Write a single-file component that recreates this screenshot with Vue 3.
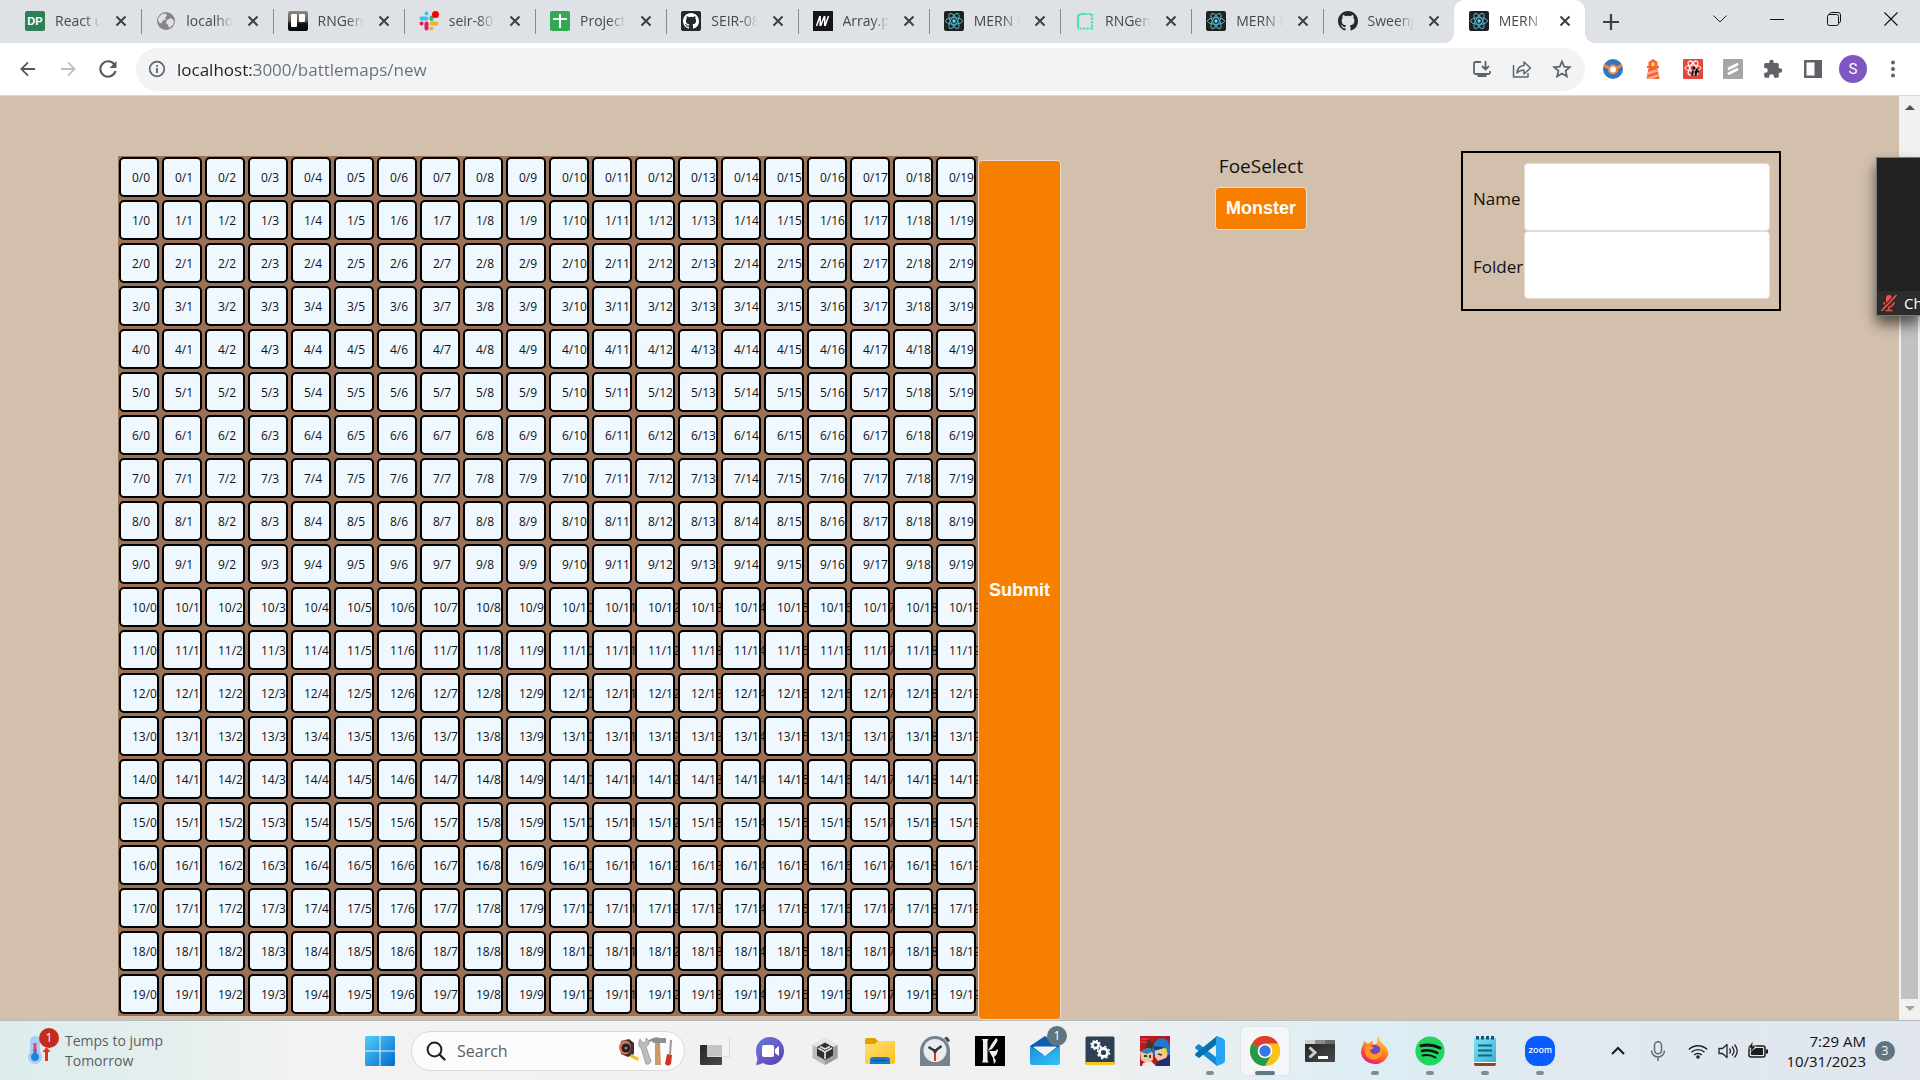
<script setup>
import { ref } from 'vue'

const tabs = [
  { icon: 'dp', title: 'React u' },
  { icon: 'globe', title: 'localhos' },
  { icon: 'trello', title: 'RNGen' },
  { icon: 'slack', title: 'seir-80' },
  { icon: 'sheets', title: 'Project' },
  { icon: 'github-dark', title: 'SEIR-08' },
  { icon: 'mdn', title: 'Array.p' },
  { icon: 'react', title: 'MERN I' },
  { icon: 'rn', title: 'RNGen' },
  { icon: 'react', title: 'MERN I' },
  { icon: 'github', title: 'Sweeng' },
  { icon: 'react', title: 'MERN', active: true }
]
const extensions = ['swirl', 'lighthouse', 'reactit', 'gray', 'puzzle', 'panel']
const apps = [
  { icon: 'taskview', label: 'Task view' },
  { icon: 'chat', label: 'Chat' },
  { icon: 'unity', label: 'Unity Hub' },
  { icon: 'folder', label: 'File Explorer' },
  { icon: 'clock', label: 'Clock' },
  { icon: 'kapp', label: 'Game launcher' },
  { icon: 'mail', label: 'Mail', badge: 1 },
  { icon: 'gears', label: 'Services' },
  { icon: 'hero', label: 'Battle game' },
  { icon: 'vscode', label: 'Visual Studio Code', open: true },
  { icon: 'chrome', label: 'Google Chrome', current: true },
  { icon: 'terminal', label: 'Terminal' },
  { icon: 'firefox', label: 'Firefox', open: true },
  { icon: 'spotify', label: 'Spotify', open: true },
  { icon: 'notepad', label: 'Notepad', open: true },
  { icon: 'zoomapp', label: 'Zoom', open: true }
]
const size = 20
const rows = Array.from({ length: size }, (_, r) => Array.from({ length: size }, (_, c) => `${r}/${c}`))
const address = ref('localhost:3000/battlemaps/new')
const name = ref('')
const folder = ref('')
const query = ref('')
</script>

<template>
  <div class="desktop">
    <svg class="sprite" aria-hidden="true">
      <defs>
        <linearGradient id="g-win" x1="0" y1="0" x2="1" y2="1"><stop offset="0" stop-color="#4fd0fb" /><stop offset="1" stop-color="#0469ca" /></linearGradient>
        <linearGradient id="g-chat" x1="0" y1="0" x2="1" y2="1"><stop offset="0" stop-color="#5b7fd6" /><stop offset=".5" stop-color="#6a5cc8" /><stop offset="1" stop-color="#4b3fb4" /></linearGradient>
        <linearGradient id="g-folder" x1="0" y1="0" x2="1" y2="1"><stop offset="0" stop-color="#ffdf73" /><stop offset="1" stop-color="#fdbf22" /></linearGradient>
        <linearGradient id="g-mail" x1="0" y1="0" x2="1" y2="1"><stop offset="0" stop-color="#1c8fe0" /><stop offset="1" stop-color="#32c5f4" /></linearGradient>
        <linearGradient id="g-fox" x1=".8" y1="0" x2=".3" y2="1"><stop offset="0" stop-color="#ffe14a" /><stop offset=".45" stop-color="#ff8a1e" /><stop offset=".8" stop-color="#ff3750" /><stop offset="1" stop-color="#e31587" /></linearGradient>
        <linearGradient id="g-note" x1="0" y1="0" x2="1" y2="1"><stop offset="0" stop-color="#7fe0f4" /><stop offset="1" stop-color="#39b2d8" /></linearGradient>
        <linearGradient id="g-dark" x1="0" y1="0" x2="1" y2="1"><stop offset="0" stop-color="#262626" /><stop offset="1" stop-color="#4a4a4a" /></linearGradient>
        <linearGradient id="g-trello" x1="0" y1="0" x2="0" y2="1"><stop offset="0" stop-color="#8a8b85" /><stop offset=".45" stop-color="#6f6148" /><stop offset=".65" stop-color="#0c1420" /><stop offset="1" stop-color="#05080d" /></linearGradient>
      </defs>
      <symbol id="globe" viewBox="0 0 20 20"><circle cx="10" cy="10" r="9" fill="#868686" /><path d="M3 6l3-3 4-.5 1 2-2 2 1 2-3 1-2 3-2-1-1-3zM11 9l4-2 3 3-1 4-4 3-1-3-2-2z" fill="#dee1e6" /></symbol>
      <symbol id="trello" viewBox="0 0 20 20"><rect width="20" height="20" rx="2" fill="url(#g-trello)" /><rect x="3" y="3" width="6" height="13" rx="1" fill="#fff" /><rect x="11" y="3" width="6" height="8" rx="1" fill="#fff" /></symbol>
      <symbol id="slack" viewBox="0 0 20 20"><g fill="none" stroke-width="4" stroke-linecap="round"><path d="M2.500 7.500h5M7.500 2.500v.1" stroke="#36c5f0" /><path d="M12.500 6.500v1.500" stroke="#2eb67d" /><path d="M12.500 12.500h5M12.500 17.500v-.1" stroke="#ecb22e" /><path d="M7.500 12.500v5M2.500 12.500h.1" stroke="#e01e5a" /></g><circle cx="16.500" cy="3.500" r="3.500" fill="#f00" /></symbol>
      <symbol id="sheets" viewBox="0 0 20 20"><rect width="20" height="20" rx="2" fill="#34a853" /><path d="M10 3v14M3 8h14" stroke="#fff" stroke-width="2" /></symbol>
      <symbol id="github" viewBox="0 0 16 16"><path fill="#24292f" d="M8 0C3.580 0 0 3.580 0 8c0 3.540 2.290 6.530 5.470 7.590.4.070.55-.17.55-.38 0-.19-.01-.82-.01-1.490-2.010.37-2.530-.49-2.690-.94-.09-.23-.48-.94-.82-1.130-.28-.15-.68-.52-.01-.53.63-.01 1.080.58 1.230.82.72 1.210 1.870.87 2.330.66.07-.52.28-.87.51-1.070-1.780-.2-3.640-.89-3.640-3.950 0-.87.31-1.590.82-2.150-.08-.2-.36-1.020.08-2.120 0 0 .67-.21 2.200.82a7.600 7.600 0 0 1 4 0c1.530-1.040 2.200-.82 2.200-.82.44 1.100.16 1.920.08 2.120.51.56.82 1.270.82 2.150 0 3.070-1.870 3.750-3.650 3.950.29.25.54.73.54 1.480 0 1.070-.01 1.930-.01 2.200 0 .21.15.46.55.38A8 8 0 0 0 16 8c0-4.420-3.580-8-8-8z" /></symbol>
      <symbol id="github-dark" viewBox="0 0 20 20"><rect width="20" height="20" rx="2" fill="#24292e" /><path transform="translate(2 2)" fill="#fff" d="M8 0C3.580 0 0 3.580 0 8c0 3.540 2.290 6.530 5.470 7.590.4.070.55-.17.55-.38 0-.19-.01-.82-.01-1.490-2.010.37-2.530-.49-2.690-.94-.09-.23-.48-.94-.82-1.130-.28-.15-.68-.52-.01-.53.63-.01 1.080.58 1.230.82.72 1.210 1.870.87 2.330.66.07-.52.28-.87.51-1.070-1.780-.2-3.640-.89-3.640-3.950 0-.87.31-1.590.82-2.150-.08-.2-.36-1.020.08-2.120 0 0 .67-.21 2.200.82a7.600 7.600 0 0 1 4 0c1.530-1.040 2.200-.82 2.200-.82.44 1.100.16 1.920.08 2.120.51.56.82 1.270.82 2.150 0 3.070-1.870 3.750-3.650 3.950.29.25.54.73.54 1.480 0 1.070-.01 1.930-.01 2.200 0 .21.15.46.55.38A8 8 0 0 0 16 8c0-4.420-3.580-8-8-8z" /></symbol>
      <symbol id="mdn" viewBox="0 0 20 20"><rect width="20" height="20" fill="#15141a" /><path d="M3.500 15L7 5M7.200 5v10M7.500 15L11.500 5M11.700 5v10M15.500 5L12 15" fill="none" stroke="#fff" stroke-width="1.500" /></symbol>
      <symbol id="react" viewBox="0 0 20 20"><rect width="20" height="20" rx="2" fill="#202020" /><g fill="none" stroke="#4fb8cf" stroke-width="1"><ellipse cx="10" cy="10" rx="8.500" ry="3.300" /><ellipse cx="10" cy="10" rx="8.500" ry="3.300" transform="rotate(60 10 10)" /><ellipse cx="10" cy="10" rx="8.500" ry="3.300" transform="rotate(120 10 10)" /></g><circle cx="10" cy="10" r="1.700" fill="#61dafb" /></symbol>
      <symbol id="rn" viewBox="0 0 20 20"><path d="M3 17.500V7q0-4 4-4h3" fill="none" stroke="#4be3b5" stroke-width="2.200" /><path d="M10 3h7v14.500H3" fill="none" stroke="#4be3b5" stroke-width="2.200" stroke-dasharray="2.500 1" /></symbol>
      <symbol id="close" viewBox="0 0 12 12"><path d="M1.500 1.500l9 9m0-9l-9 9" stroke="#3c4043" stroke-width="2" /></symbol>
      <symbol id="plus" viewBox="0 0 16 16"><path d="M8 0v16M0 8h16" stroke="#3c4043" stroke-width="2.200" /></symbol>
      <symbol id="w-down" viewBox="0 0 14 14"><path d="M.5 3.500L7 10l6.500-6.500" fill="none" stroke="#222" /></symbol>
      <symbol id="w-min" viewBox="0 0 14 14"><path d="M0 7.500h14" stroke="#111" stroke-width="1" /></symbol>
      <symbol id="w-max" viewBox="0 0 14 14"><rect x=".5" y="2.500" width="11" height="11" rx="2" fill="none" stroke="#111" /><path d="M2.500 2.500v-.5q.5-1.500 2-1.500H11q2.500 0 2.500 2.500v6q0 1.500-1.500 2" fill="none" stroke="#111" /></symbol>
      <symbol id="w-close" viewBox="0 0 14 14"><path d="M.5.500l13 13m0-13l-13 13" stroke="#111" stroke-width="1.100" /></symbol>
      <symbol id="arrow-back" viewBox="0 0 18 18"><path d="M17 9H2M9 1.500L1.500 9 9 16.500" fill="none" stroke="currentColor" stroke-width="2" /></symbol>
      <symbol id="reload" viewBox="0 0 18 18"><path d="M15.300 4.500A7.700 7.700 0 1 0 16.500 11" fill="none" stroke="currentColor" stroke-width="2.100" /><path d="M17.500 1v7h-7z" fill="currentColor" /></symbol>
      <symbol id="info" viewBox="0 0 18 18"><circle cx="9" cy="9" r="7.300" fill="none" stroke="#5f6368" stroke-width="1.700" /><path d="M9 8v5M9 5v1.800" stroke="#5f6368" stroke-width="1.800" /></symbol>
      <symbol id="install" viewBox="0 0 20 20"><path d="M9 3H3.500Q2 3 2 4.500v9Q2 15 3.500 15h13q1.500 0 1.500-1.500V12" fill="none" stroke="#5f6368" stroke-width="1.800" /><path d="M5.500 15h9v3h-9z" fill="#5f6368" /><path d="M13.500 2v8M10 7l3.500 3.500L17 7" fill="none" stroke="#5f6368" stroke-width="1.800" /></symbol>
      <symbol id="share" viewBox="0 0 20 20"><path d="M1.500 6v12h14.500v-4M5 14q.5-7 7-7.500V3l6.500 6-6.500 6v-3.700Q7.500 11 5 14z" fill="none" stroke="#5f6368" stroke-width="1.500" stroke-linejoin="round" /></symbol>
      <symbol id="star" viewBox="0 0 20 20"><path d="M10 2.500l2.200 5.200 5.700.5-4.300 3.700 1.300 5.600-4.900-3-4.900 3 1.300-5.600L2.100 8.200l5.700-.5z" fill="none" stroke="#5f6368" stroke-width="1.700" /></symbol>
      <symbol id="swirl" viewBox="0 0 20 20"><circle cx="10" cy="10" r="10" fill="#3574bd" /><path d="M.8 6L6 9M19.200 6L14 9" stroke="#f08a4b" stroke-width="3" /><circle cx="10" cy="10.500" r="4" fill="#fff" stroke="#f08a4b" stroke-width="2.200" /></symbol>
      <symbol id="lighthouse" viewBox="0 0 20 20"><path d="M10 0l4.500 3v4H16v2h-1.500l2 11h-13l2-11H4V7h1.500V3z" fill="#f4613c" /><path d="M8.500 3.500h3V7h-3z" fill="#fde92e" /><path d="M5 13l9.500-3 .4 2.500L4.500 16zM4 19l11.500-4 .5 2-7 3H3.700z" fill="#ffab8c" /></symbol>
      <symbol id="reactit" viewBox="0 0 20 20"><rect width="20" height="20" rx="1" fill="#e2493c" /><g fill="none" stroke="#fff" stroke-width="1"><ellipse cx="10" cy="9" rx="8" ry="3" /><ellipse cx="10" cy="9" rx="8" ry="3" transform="rotate(60 10 9)" /><ellipse cx="10" cy="9" rx="8" ry="3" transform="rotate(120 10 9)" /></g><path d="M10 11.500l-1 5M14 9.500l-1.500 7.500M11.500 12.500h4.500" fill="none" stroke="#111" stroke-width="2" /><circle cx="11" cy="9" r="1.500" fill="#111" /></symbol>
      <symbol id="gray" viewBox="0 0 20 20"><rect width="20" height="20" rx="1" fill="#a6a6a6" /><path d="M6 9.500L14 5.500M6 14.500L14 10.500" stroke="#fff" stroke-width="2.800" stroke-linecap="round" /></symbol>
      <symbol id="puzzle" viewBox="0 0 20 20"><path d="M17 9.200h-1.200V5.500q0-1.500-1.500-1.500h-3.600V2.900a2.200 2.200 0 0 0-4.400 0V4H2.700Q1.200 4 1.200 5.500V9h1.200a2.400 2.400 0 0 1 0 4.800H1.200v3.500q0 1.500 1.500 1.500h3.500v-1.200a2.400 2.400 0 0 1 4.800 0v1.200h3.300q1.500 0 1.500-1.500v-3.600H17a2.200 2.200 0 0 0 0-4.500z" fill="#5f6368" /></symbol>
      <symbol id="panel" viewBox="0 0 20 20"><path d="M1 1h18v18H1zM3.500 3.500v13h8v-13z" fill="#5f6368" fill-rule="evenodd" /></symbol>
      <symbol id="dots" viewBox="0 0 20 20"><g fill="#5f6368"><circle cx="10" cy="3.500" r="2" /><circle cx="10" cy="10" r="2" /><circle cx="10" cy="16.500" r="2" /></g></symbol>

      <symbol id="thermo" viewBox="0 0 24 32"><rect x="2" y="1" width="10" height="22" rx="5" fill="#a9cdf3" /><circle cx="7" cy="22" r="7" fill="#a9cdf3" /><path d="M7 8v10" stroke="#e2476b" stroke-width="3" /><path d="M7 14v6" stroke="#7063b8" stroke-width="3" /><circle cx="7" cy="22" r="4" fill="#1b84dd" /><path d="M18.500 12l4 5h-2.500v9h-3v-9h-2.500z" fill="#f02a1c" /></symbol>
      <symbol id="windows" viewBox="0 0 30 30"><path d="M0 1.500Q0 0 1.500 0h13v14.500H0zM15.500 0h13Q30 0 30 1.500v13H15.500zM0 15.500h14.500V30h-13Q0 30 0 28.500zM15.500 15.500H30v13q0 1.500-1.500 1.500h-13z" fill="url(#g-win)" /></symbol>
      <symbol id="search" viewBox="0 0 20 20"><circle cx="8.500" cy="8.500" r="6.900" fill="none" stroke="#222" stroke-width="2" /><path d="M13.500 13.500l5 5" stroke="#222" stroke-width="2.400" stroke-linecap="round" /></symbol>
      <symbol id="tools" viewBox="0 0 56 30"><path d="M3 5l8-2 5 4v11l-6 3-7-3z" fill="#353535" /><ellipse cx="7" cy="11.500" rx="6" ry="7" fill="#e96f4f" /><circle cx="8" cy="12" r="4.500" fill="#222" /><circle cx="8" cy="12" r="1.500" fill="#888" /><path d="M13 18l8 4-1 3-8-4z" fill="#f1c02b" /><path d="M22 3l3 4 3-1V2q4 2 3 6l-3 3 5 14q-1 4-5 3L23 12q-4-2-1-9z" fill="#bcbcbc" stroke="#8e8e8e" stroke-width=".7" /><path d="M37 7h5l1 22h-6z" fill="#c99a6c" /><path d="M31 4q6-4 11-2h6v5H36q-3-3-5-1z" fill="#899097" /><path d="M52 4l2 0-1 15-2-1z" fill="#999" /><path d="M49 18l5 1-1 9q-3 3-6 0z" fill="#cf321f" /></symbol>
      <symbol id="taskview" viewBox="0 0 30 30"><rect x="0" y="9" width="22" height="20" rx="1" fill="url(#g-dark)" /><rect x="7" y="1" width="23" height="20" rx="1" fill="#f1f1f1" opacity=".88" /><path d="M7 9h15v12H7z" fill="#c4c4c4" /><path d="M7.500 20.500h22v-19" fill="none" stroke="#dadada" /></symbol>
      <symbol id="chat" viewBox="0 0 30 30"><path d="M15 1a14 14 0 0 1 0 28q-4 0-7-2-4 2-7 2l1.500-6Q1 19 1 15A14 14 0 0 1 15 1z" fill="url(#g-chat)" /><rect x="7" y="9" width="12" height="12" rx="2" fill="#fff" /><path d="M20 13l4-3v10l-4-3z" fill="#fff" /></symbol>
      <symbol id="unity" viewBox="0 0 30 30"><path d="M15 2l12.500 7v13L15 29 2.500 22V9z" fill="#bababa" /><path d="M15 2l12.500 7L15 16 2.500 9z" fill="#e4e4e4" /><path d="M15 16l12.500-7v13L15 29z" fill="#9d9d9d" /><path d="M15 6.500l8 4.500v8.500L15 24l-8-4.500V11z" fill="#303030" /><path d="M15 16v7M15 16l-7-4M15 16l7-4M10 10.500l5 2.500 5-2.500" stroke="#ddd" stroke-width="1.700" fill="none" /></symbol>
      <symbol id="folder" viewBox="0 0 30 30"><path d="M0 4q0-2 2-2h8l3 3h15q2 0 2 2v6H0z" fill="#e0a000" /><path d="M0 8h10l3-3h15q2 0 2 2v19q0 2-2 2H2q-2 0-2-2z" fill="url(#g-folder)" /><path d="M5 28v-4q0-3 3-3h14q3 0 3 3v4z" fill="#1378cf" /><path d="M8 24.500h14" stroke="#0a4d91" /></symbol>
      <symbol id="clock" viewBox="0 0 30 30"><path d="M24 2l3-1.500 3 4-2 2z" fill="#444c53" /><path d="M15 0a15 15 0 0 1 15 15v15H0V15A15 15 0 0 1 15 0z" fill="#76838d" /><circle cx="15" cy="14.500" r="11.500" fill="#e9ebee" /><path d="M15 15L8.500 11M15 15l6.500-5" stroke="#30363b" stroke-width="2.500" /><path d="M15 15v10" stroke="#d83b12" stroke-width="2" /><circle cx="15" cy="15" r="2" fill="#30363b" /></symbol>
      <symbol id="kapp" viewBox="0 0 30 30"><rect width="30" height="30" fill="#000" /><path d="M7 3h6.500l-1 2v19l1 2.500H7L8 24V5z" fill="#eee" /><path d="M21 2q2 1 1.500 3-3 5-5.500 8l-4 2q3-7 8-13z" fill="#eee" /><path d="M14 15h6l3-2q0 5-4 8l2 4-2 3-1-6z" fill="#eee" /></symbol>
      <symbol id="mail" viewBox="0 0 30 30"><path d="M0 10L15 0l15 10v9H0z" fill="#0c5fb0" /><path d="M3 11h24l-12 9z" fill="#eef6fb" /><path d="M0 10l15 10 15-10v17q0 2-2 2H2q-2 0-2-2z" fill="url(#g-mail)" /><path d="M4 10.500h22L15 18z" fill="#eef2f4" /></symbol>
      <symbol id="gears" viewBox="0 0 30 30"><rect x=".5" y=".5" width="29" height="28" rx="1.500" fill="#2d4053" /><path d="M.5 26h29v1.500q0 1.500-1.500 1.500H2q-1.500 0-1.500-1.500z" fill="#f6c622" /><circle cx="10.500" cy="9" r="3" fill="none" stroke="#fff" stroke-width="2.400" /><circle cx="10.500" cy="9" r="4.600" fill="none" stroke="#fff" stroke-width="1.400" stroke-dasharray="1.800 1.812" /><circle cx="18.500" cy="16.500" r="4" fill="none" stroke="#fff" stroke-width="2.800" /><circle cx="18.500" cy="16.500" r="6" fill="none" stroke="#fff" stroke-width="1.500" stroke-dasharray="2.350 2.362" /></symbol>
      <symbol id="hero" viewBox="0 0 30 30"><rect width="30" height="30" fill="#b51820" /><path d="M1 3h8M0 6h7" stroke="#ef5148" /><path d="M6 10l2-7 4 4 6-4 1 8-6 4-10 2z" fill="#523125" /><path d="M0 16l8-4 5 5v7l-7 3-5-3z" fill="#f5c29e" /><path d="M1 16l6 2 5-2-1-4-7 1z" fill="#2d7fc4" /><path d="M12 13Q15 2 22 2q7 1 8 9v8H13z" fill="#2478c6" /><path d="M15 15l8-3 5 4-2 8-8 1-3-4z" fill="#f6c5a4" /><path d="M13 10l10 1 6 6-3-1-5-3-7 1z" fill="#1a3c82" /><circle cx="24" cy="15" r="3" fill="#e9d640" /><path d="M18 25l8-3 4-4v12H15z" fill="#202f70" /><path d="M3 27l8-2 5 5H2z" fill="#e9ecef" /><path d="M18 18l4 1M4 20h3M10 19v3" stroke="#194b35" stroke-width="1.800" /></symbol>
      <symbol id="vscode" viewBox="0 0 30 30"><path d="M22 30L1 13q-2-1 0-3l3-2 18 14z" fill="#118bd0" /><path d="M4 22l-3-2q-2-1 0-3L22 0v8z" fill="#0870b0" /><path d="M22 0l6 2.500q2 1 2 3v19q0 2-2 3L22 30l-1-2V2z" fill="#28a4f2" /></symbol>
      <symbol id="chrome" viewBox="0 0 30 30"><circle cx="15" cy="15" r="15" fill="#fbc116" /><path d="M15 15L2 7.500a15 15 0 0 1 26 0z" fill="#df3e31" /><path d="M2 7.500A15 15 0 0 0 15 30l6.500-11.500L15 15z" fill="#259a48" /><path d="M15 15L15 7.500h13A15 15 0 0 1 15 30l6.500-11z" fill="#fbc116" /><circle cx="15" cy="15" r="7.300" fill="#fff" /><circle cx="15" cy="15" r="5.700" fill="#3478e8" /></symbol>
      <symbol id="terminal" viewBox="0 0 30 30"><path d="M0 5q0-1 1-1h28q1 0 1 1v3H0z" fill="#8b8b8b" /><path d="M0 5q0-1 1-1h9v4H0z" fill="#cecece" /><path d="M20 4h9q1 0 1 1v3H20z" fill="#696969" /><path d="M0 8h30v17q0 1-1 1H1q-1 0-1-1z" fill="url(#g-dark)" /><path d="M4.500 11.500l5.500 5-5.500 5" fill="none" stroke="#ccc" stroke-width="3" /><path d="M13 21.500h10" stroke="#fff" stroke-width="3" /></symbol>
      <symbol id="firefox" viewBox="0 0 30 30"><path d="M18 0q2 5 5 8 5 4 5.500 10a14 13 0 0 1-27.500-1q0-5 2-8L4 5l4 3q3-3 5-3-1 3 1 4l3-2q0-4 1-7z" fill="url(#g-fox)" /><circle cx="14.500" cy="15" r="6.300" fill="#7844cc" /><path d="M5 11q5-3 9 1l-4 2q1 5 6 4 5-1 4-7 5 7-1 11-7 4-12-1-3-4-2-10z" fill="#ff981f" /></symbol>
      <symbol id="spotify" viewBox="0 0 30 30"><circle cx="15" cy="15" r="14.600" fill="#1fd75f" /><path d="M6 9.800q10-2.500 19 2.200" fill="none" stroke="#101010" stroke-width="3" stroke-linecap="round" /><path d="M7 15q8-2 15.500 2" fill="none" stroke="#101010" stroke-width="2.500" stroke-linecap="round" /><path d="M7.500 19.500q7-1.500 13 2" fill="none" stroke="#101010" stroke-width="2" stroke-linecap="round" /></symbol>
      <symbol id="notepad" viewBox="0 0 30 30"><path d="M4 25h22v3q0 2-2 2H6q-2 0-2-2z" fill="#8c4617" /><path d="M4 25h22v2H4z" fill="#fff" /><path d="M4 3q0-1 1-1h20q1 0 1 1v23H4z" fill="url(#g-note)" /><path d="M7.500 0v3.500M12.500 0v3.500M17.500 0v3.500M22.500 0v3.500" stroke="#15536c" stroke-width="3" /><path d="M8 9.500h14M8 14.500h14M8 19.500h14" stroke="#126682" stroke-width="2" /></symbol>
      <symbol id="t-up" viewBox="0 0 16 16"><path d="M2 11l6-6 6 6" fill="none" stroke="#1b1b1b" stroke-width="2" /></symbol>
      <symbol id="t-mic" viewBox="0 0 20 20"><rect x="6.500" y=".7" width="7" height="12" rx="3.500" fill="none" stroke="#5c6c78" stroke-width="1.500" /><path d="M3.500 9.500a6.500 6.500 0 0 0 13 0M10 16v4" fill="none" stroke="#5c6c78" stroke-width="1.500" /></symbol>
      <symbol id="t-wifi" viewBox="0 0 20 20"><g fill="none" stroke="#222" stroke-width="1.400"><path d="M.8 8.500a13 13 0 0 1 18.400 0M3.500 11.300a9.200 9.200 0 0 1 13 0M6.200 14a5.400 5.400 0 0 1 7.600 0" /></g><circle cx="10" cy="16" r="1.800" fill="#222" /></symbol>
      <symbol id="t-vol" viewBox="0 0 20 20"><path d="M1 7.500h3.500L9 3.500v13l-4.500-4H1z" fill="none" stroke="#222" stroke-width="1.300" stroke-linejoin="round" /><path d="M11.500 7.500q2 2.500 0 5M14 5.500q4 4.500 0 9M16.500 3.500q5.500 6.500 0 13" fill="none" stroke="#222" stroke-width="1.300" /></symbol>
      <symbol id="t-bat" viewBox="0 0 20 20"><rect x="1" y="5" width="16" height="11" rx="2" fill="none" stroke="#1b1b1b" stroke-width="1.500" /><path d="M3 10l5-3h7v7H3z" fill="#1b1b1b" /><path d="M18 8.500h2v4h-2z" fill="#1b1b1b" /><path d="M5 0L0 7h3l-1 5 6-7H4.500z" fill="#1b1b1b" stroke="#dfe6ee" stroke-width=".6" /></symbol>
      <symbol id="mic-off" viewBox="0 0 16 18"><rect x="5" y="1" width="6" height="10" rx="3" fill="#f0524f" /><path d="M3 8a5 5 0 0 0 10 0M8 13v3M4.500 16.500h7" fill="none" stroke="#f0524f" stroke-width="1.600" /><path d="M15.500 1L.5 17" stroke="#292929" stroke-width="4" /><path d="M15.500 1L.5 17" stroke="#f0524f" stroke-width="1.600" /></symbol>
    </svg>

    <header class="browser">
      <div class="strip">
        <nav class="tabs" aria-label="Open tabs">
          <div v-for="(tab, i) in tabs" :key="i" class="tab" :class="{ active: tab.active }">
            <span v-if="tab.icon === 'dp'" class="dp">DP</span>
            <svg v-else class="i20"><use :href="'#' + tab.icon" /></svg>
            <span class="title">{{ tab.title }}</span>
            <button class="tab-close" aria-label="Close tab"><svg class="i12"><use href="#close" /></svg></button>
          </div>
        </nav>
        <button class="new-tab" aria-label="New tab"><svg class="i16"><use href="#plus" /></svg></button>
        <div class="window-controls">
          <button v-for="c in ['down', 'min', 'max', 'close']" :key="c" :aria-label="c"><svg class="i14"><use :href="'#w-' + c" /></svg></button>
        </div>
      </div>
      <div class="toolbar">
        <div class="nav-buttons">
          <button aria-label="Back"><svg class="i16"><use href="#arrow-back" /></svg></button>
          <button class="forward" aria-label="Forward"><svg class="i16"><use href="#arrow-back" /></svg></button>
          <button aria-label="Reload"><svg class="i18"><use href="#reload" /></svg></button>
        </div>
        <div class="omnibox">
          <svg class="i18"><use href="#info" /></svg>
          <input v-model="address" class="address" aria-label="Address" spellcheck="false" />
          <div class="page-actions">
            <button aria-label="Install"><svg class="i20"><use href="#install" /></svg></button>
            <button aria-label="Share"><svg class="i20"><use href="#share" /></svg></button>
            <button aria-label="Bookmark"><svg class="i20"><use href="#star" /></svg></button>
          </div>
        </div>
        <div class="extensions">
          <button v-for="e in extensions" :key="e" :aria-label="e"><svg class="i20"><use :href="'#' + e" /></svg></button>
          <button aria-label="Profile"><span class="avatar">S</span></button>
          <button aria-label="Menu"><svg class="i20"><use href="#dots" /></svg></button>
        </div>
      </div>
    </header>

    <div class="viewport">
      <main class="page">
        <div class="board">
          <div v-for="(row, r) in rows" :key="r" class="row">
            <div v-for="cell in row" :key="cell" class="cell">{{ cell }}</div>
          </div>
        </div>
        <button class="orange submit">Submit</button>
        <section class="foes">
          <p>FoeSelect</p>
          <button class="orange monster">Monster</button>
        </section>
        <form class="details" @submit.prevent>
          <label for="map-name">Name</label>
          <input id="map-name" v-model="name" />
          <label for="map-folder">Folder</label>
          <input id="map-folder" v-model="folder" />
        </form>
      </main>
      <div class="scrollbar" aria-hidden="true">
        <span class="arrow up"></span>
        <span class="thumb"></span>
        <span class="arrow down"></span>
      </div>
      <aside class="call">
        <div class="caller"><svg class="mic"><use href="#mic-off" /></svg><span>Ch</span></div>
      </aside>
    </div>

    <footer class="taskbar">
      <button class="weather">
        <span class="weather-icon"><svg><use href="#thermo" /></svg><span class="count red">1</span></span>
        <span class="weather-text">Temps to jump<br />Tomorrow</span>
      </button>
      <div class="dock">
        <button class="start" aria-label="Start"><svg class="i30"><use href="#windows" /></svg></button>
        <label class="search">
          <svg class="i20"><use href="#search" /></svg>
          <input v-model="query" placeholder="Search" aria-label="Search" />
          <svg class="tools"><use href="#tools" /></svg>
        </label>
        <div class="apps">
          <button v-for="a in apps" :key="a.icon" class="app" :class="{ open: a.open, current: a.current }" :aria-label="a.label">
            <span v-if="a.icon === 'zoomapp'" class="zoom-logo">zoom</span>
            <svg v-else class="i30"><use :href="'#' + a.icon" /></svg>
            <span v-if="a.badge" class="count slate">{{ a.badge }}</span>
          </button>
        </div>
      </div>
      <div class="tray">
        <button aria-label="Show hidden icons"><svg class="i16"><use href="#t-up" /></svg></button>
        <button aria-label="Microphone"><svg class="i20"><use href="#t-mic" /></svg></button>
        <button class="status" aria-label="Network, volume and battery">
          <svg class="i20"><use href="#t-wifi" /></svg>
          <svg class="i20"><use href="#t-vol" /></svg>
          <svg class="i20"><use href="#t-bat" /></svg>
        </button>
        <button class="time">7:29 AM<br />10/31/2023</button>
        <span class="notes">3</span>
      </div>
    </footer>
  </div>
</template>

<style>
body {
  margin: 0;
}
</style>

<style scoped>
* {
  box-sizing: border-box;
}
.desktop {
  display: flex;
  flex-direction: column;
  min-height: 100vh;
  font-family: "Open Sans", "Noto Sans", sans-serif;
  color: #111;
}
.sprite {
  position: absolute;
  width: 0;
  height: 0;
}
svg {
  display: block;
  flex: none;
}
button {
  padding: 0;
  border: 0;
  background: none;
  font: inherit;
  color: inherit;
  display: flex;
  align-items: center;
  justify-content: center;
}
input {
  font: inherit;
  outline: 0;
}
.i12 { width: 12px; height: 12px; }
.i14 { width: 14px; height: 14px; }
.i16 { width: 16px; height: 16px; }
.i18 { width: 18px; height: 18px; }
.i20 { width: 20px; height: 20px; }
.i30 { width: 30px; height: 30px; }

.strip {
  display: flex;
  height: 43px;
  padding-left: 10px;
  background: #dee1e6;
}
.tabs {
  display: flex;
  flex: 0 1 1575px;
  min-width: 0;
}
.tab {
  position: relative;
  flex: 1 1 0;
  min-width: 0;
  display: flex;
  align-items: center;
  padding: 0 14px 2px 15px;
  font-size: 14px;
  color: #45494d;
}
.tab + .tab::before {
  content: "";
  position: absolute;
  left: 0;
  top: 9px;
  width: 1px;
  height: 25px;
  background: #888c91;
}
.tab.active {
  background: #fff;
  border-radius: 10px 10px 0 0;
}
.tab.active::before,
.tab.active::after {
  content: "";
  position: absolute;
  top: auto;
  bottom: 0;
  width: 10px;
  height: 10px;
  background: radial-gradient(circle at 0 0, transparent 10px, #fff 10px);
}
.tab.active::before {
  left: -10px;
}
.tab.active::after {
  right: -10px;
  background: radial-gradient(circle at 100% 0, transparent 10px, #fff 10px);
}
.dp {
  flex: none;
  width: 20px;
  height: 20px;
  border-radius: 2px;
  background: #2f7f58;
  color: #fff;
  font: bold 11px/20px "Liberation Sans", Arial, sans-serif;
  text-align: center;
}
.title {
  flex: 1;
  min-width: 0;
  margin: 0 12px 0 10px;
  overflow: hidden;
  white-space: nowrap;
  -webkit-mask-image: linear-gradient(90deg, #000 60%, transparent 96%);
  mask-image: linear-gradient(90deg, #000 60%, transparent 96%);
}
.new-tab {
  width: 52px;
}
.window-controls {
  display: flex;
  height: 38px;
  margin-left: auto;
  padding-right: 1px;
}
.window-controls button {
  width: 57px;
}
.toolbar {
  display: flex;
  align-items: center;
  height: 53px;
  border-bottom: 1px solid #d5d7da;
  background: #fff;
  color: #55595e;
}
.nav-buttons {
  display: flex;
  padding: 0 8px;
}
.nav-buttons button,
.page-actions button,
.extensions button {
  width: 40px;
  height: 40px;
}
.nav-buttons .forward {
  color: #bcbec1;
  transform: rotate(180deg);
}
.omnibox {
  flex: 1;
  display: flex;
  align-items: center;
  height: 43px;
  padding: 0 3px 0 12px;
  border-radius: 22px;
  background: #f1f3f4;
}
.address {
  flex: 1;
  min-width: 0;
  margin-left: 11px;
  padding: 0;
  border: 0;
  font-size: 17px;
  color: transparent;
  background: linear-gradient(90deg, #202124 78px, #6a6e73 78px);
  -webkit-background-clip: text;
  background-clip: text;
}
.page-actions {
  display: flex;
}
.extensions {
  display: flex;
  padding: 0 7px 0 8px;
}
.avatar {
  width: 28px;
  height: 28px;
  border-radius: 50%;
  background: #7e57c2;
  color: #fff;
  font: 15px/28px Roboto, sans-serif;
}

.viewport {
  position: relative;
  flex: 1;
  display: flex;
  background: #d3c0ac;
}
.page {
  flex: 1;
  min-width: 0;
  display: flex;
  align-items: flex-start;
  padding: 60px 118px 0;
}
.board {
  flex: none;
  width: 860px;
  padding: 1px;
  background: #9b7257;
}
.row {
  display: flex;
  gap: 3px;
  margin-bottom: 3px;
}
.row:last-child {
  margin-bottom: 1px;
}
.cell {
  flex: none;
  width: 40px;
  height: 40px;
  padding-left: 11px;
  border: 2px solid #000;
  border-radius: 5px;
  background: #f0f8ff;
  font-size: 12px;
  line-height: 38px;
}
.orange {
  border: 1px solid #eadccf;
  border-radius: 4px;
  background: #f77f00;
  color: #fff;
  font: bold 18px "Liberation Sans", Arial, sans-serif;
}
.submit {
  align-self: stretch;
  flex: none;
  width: 83px;
  min-height: 860px;
  margin-top: 4px;
}
.foes {
  flex: 1;
  display: flex;
  flex-direction: column;
  align-items: center;
}
.foes p {
  margin: 0;
  font-size: 19px;
  line-height: 20px;
}
.monster {
  width: 92px;
  height: 43px;
  margin-top: 11px;
}
.details {
  flex: none;
  display: grid;
  grid-template-columns: 51px 246px;
  align-items: center;
  width: 320px;
  margin-top: -5px;
  padding: 10px;
  border: 2px solid #000;
  font-size: 17px;
}
.details label {
  padding-top: 2px;
}
.details input {
  width: 100%;
  height: 68px;
  padding: 0 12px;
  border: 1px solid #e6dcd2;
  border-radius: 4px;
  background: #fff;
}
.scrollbar {
  flex: none;
  display: flex;
  flex-direction: column;
  align-items: center;
  width: 21px;
  background: #f1f1f1;
}
.arrow {
  width: 0;
  height: 0;
  margin: 9px 0;
  border: 5px solid transparent;
}
.arrow.up {
  margin-top: 4px;
  border-bottom-color: #505050;
}
.arrow.down {
  margin: 7px 0 4px;
  border-top-color: #a3a3a3;
}
.thumb {
  flex: 1;
  width: 17px;
  margin-top: 80px;
  background: #c1c1c1;
}
.call {
  position: absolute;
  top: 61px;
  right: 0;
  display: flex;
  align-items: flex-end;
  width: 44px;
  height: 159px;
  border: 1px solid #777;
  border-right: 0;
  background: #222;
  box-shadow: 0 8px 14px rgba(0, 0, 0, 0.6);
}
.caller {
  display: flex;
  align-items: center;
  gap: 7px;
  width: 100%;
  height: 24px;
  padding-left: 4px;
  overflow: hidden;
  background: #2c2c2c;
  color: #fff;
  font-size: 15px;
}
.mic {
  width: 16px;
  height: 18px;
}

.taskbar {
  display: flex;
  align-items: center;
  height: 60px;
  border-top: 1px solid #b3bbbf;
  background: linear-gradient(90deg, #dcecec 0, #e4eeee 8%, #f2f2f2 16%, #f0f0f0 56%, #dcedf4 72%, #dfe9ef 80%, #e1e6ee 100%);
}
.weather {
  flex: 1;
  justify-content: flex-start;
  padding-left: 28px;
  font-size: 14px;
  line-height: 20px;
  color: #5b5e60;
  text-align: left;
}
.weather-icon {
  position: relative;
  width: 37px;
  height: 32px;
}
.weather-icon svg {
  width: 24px;
  height: 32px;
}
.count {
  position: absolute;
  width: 20px;
  height: 20px;
  border-radius: 50%;
  color: #fff;
  font-size: 12px;
  line-height: 20px;
  text-align: center;
}
.red {
  top: -7px;
  left: 11px;
  background: #c42b1c;
}
.slate {
  top: -1px;
  right: 2px;
  background: #5f7582;
}
.dock {
  flex: none;
  display: flex;
  align-items: center;
  margin-right: 10px;
}
.start {
  width: 62px;
  height: 48px;
}
.search {
  display: flex;
  align-items: center;
  width: 274px;
  height: 40px;
  padding: 0 10px 0 14px;
  border: 1px solid #d9d9d9;
  border-radius: 20px;
  background: #fcfcfc;
}
.search input {
  flex: 1;
  min-width: 0;
  margin-left: 11px;
  padding: 0;
  border: 0;
  background: none;
  font-size: 16px;
}
.search input::placeholder {
  color: #606060;
  opacity: 1;
}
.tools {
  width: 56px;
  height: 30px;
}
.apps {
  display: flex;
  gap: 7px;
  margin-left: 6px;
}
.app {
  position: relative;
  width: 48px;
  height: 48px;
  border-radius: 5px;
}
.zoom-logo {
  width: 30px;
  height: 30px;
  border-radius: 12px;
  background: #0b5cff;
  color: #fff;
  font: 500 9px/28px Inter, sans-serif;
  text-align: center;
}
.app.current {
  background: #f3f7f9;
  box-shadow: 0 0 1px 1px #dfe3e5;
}
.app.open::after,
.app.current::after {
  content: "";
  position: absolute;
  bottom: 0;
  width: 8px;
  height: 4px;
  border-radius: 2px;
  background: #868a8c;
}
.app.current::after {
  width: 20px;
  background: #5f7885;
}
.tray {
  flex: 1;
  display: flex;
  align-items: center;
  justify-content: flex-end;
  padding-right: 25px;
}
.tray button {
  width: 40px;
  height: 48px;
}
.tray .status {
  width: 100px;
  gap: 10px;
}
.tray .time {
  width: 88px;
  justify-content: flex-end;
  font-size: 15px;
  line-height: 20px;
  text-align: right;
}
.notes {
  width: 20px;
  height: 20px;
  margin-left: 9px;
  border-radius: 50%;
  background: #5f7582;
  color: #fff;
  font-size: 12px;
  line-height: 20px;
  text-align: center;
}
</style>
